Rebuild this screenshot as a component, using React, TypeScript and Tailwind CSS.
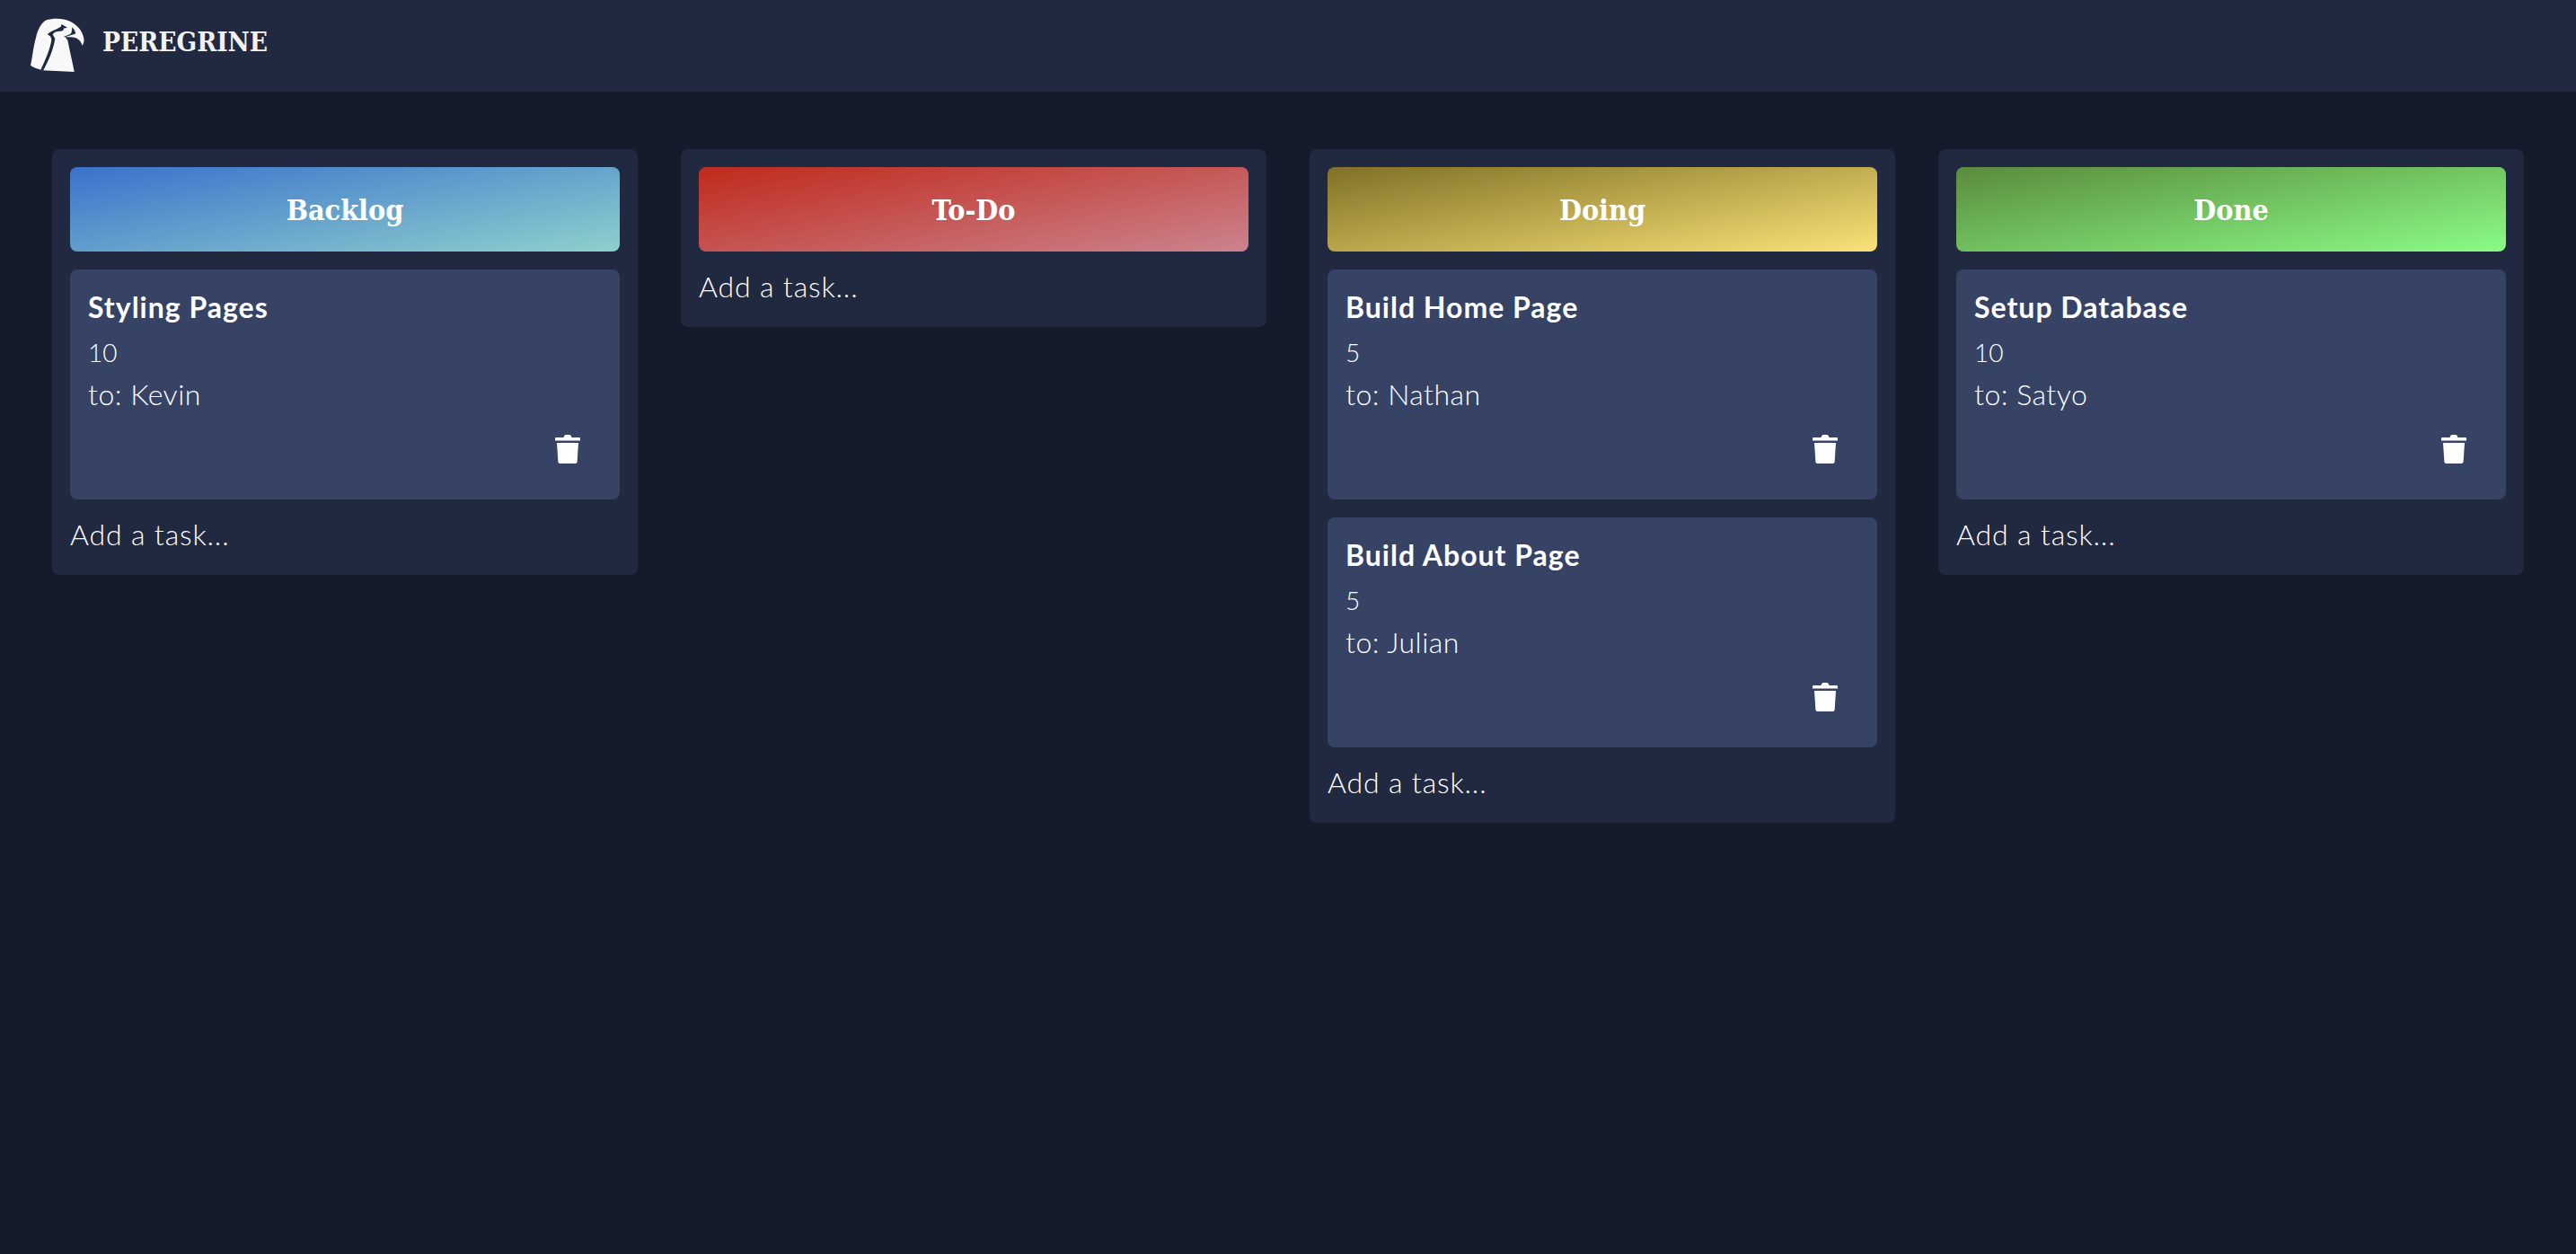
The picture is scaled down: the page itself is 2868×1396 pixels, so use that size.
const cols = [
  { name: "Backlog", grad: "bg-[linear-gradient(170deg,#3a72cc,#8fd0cc)]", tasks: [{ t: "Styling Pages", n: "10", to: "Kevin" }] },
  { name: "To-Do", grad: "bg-[linear-gradient(170deg,#c02a1c,#cb838e)]", tasks: [] },
  { name: "Doing", grad: "bg-[linear-gradient(170deg,#7f7126,#fbe277)]", tasks: [{ t: "Build Home Page", n: "5", to: "Nathan" }, { t: "Build About Page", n: "5", to: "Julian" }] },
  { name: "Done", grad: "bg-[linear-gradient(170deg,#5a8b3d,#8afc85)]", tasks: [{ t: "Setup Database", n: "10", to: "Satyo" }] },
];

function Trash() {
  return (
    <svg width="28" height="32" viewBox="0 0 28 32" fill="white">
      <path d="M0 4.5 C0 3.5 .5 3 1.5 3 H9.5 C10 1 11 0 12 0 H16 C17 0 18 1 18.5 3 H26.5 C27.5 3 28 3.5 28 4.5 V6.5 H0 Z" />
      <path d="M2 9 H26 L24.6 30 C24.5 31.3 23.6 32 22.5 32 H5.5 C4.4 32 3.5 31.3 3.4 30 Z" />
    </svg>
  );
}

function Logo() {
  return (
    <svg width="90" height="75" viewBox="0 0 270 225" className="-ml-[14px] -mr-[10px] mb-[4px] shrink-0">
      <path fill="#f8f8f8" d="M95 31 C118 24 150 24 175 36 C198 47 214 66 219 88 C222 100 220 110 215 116 C212 106 207 98 197 92 C187 88 172 87 158 88 L166 98 C172 130 182 170 188 204 L80 199 L73 196 C62 193 50 188 42 182 C48 160 50 125 60 90 C66 62 78 40 95 31 Z" />
      <path fill="#20293f" d="M98 79 C108 68 125 64 143 53 L146 45 L165 56 L152 59 C155 63 148 69 138 68 C128 68 120 72 116 79 L124 93 C118 130 102 168 84 200 L76 197 C94 160 108 125 112 97 C112 88 106 82 98 79 Z" />
      <path fill="#20293f" d="M181 55 C187 60 191 68 193 76 C185 80 172 83 158 88 L152 87 C162 82 174 80 178 74 C180 68 181 61 181 55 Z" />
    </svg>
  );
}

export default function App() {
  return (
    <div className="min-h-[1396px] bg-[#151b2b] font-['Lato',sans-serif] text-white">
      <header className="flex h-[102px] items-center bg-[#20293f] pl-[34px]">
        <Logo />
        <span className="mb-[8px] ml-[14px] font-['DejaVu_Serif',serif] text-[29.5px] font-bold text-[#f2f2f2] [font-stretch:condensed]">PEREGRINE</span>
      </header>
      <main className="grid grid-cols-4 items-start gap-[48px] px-[58px] pt-[64px]">
        {cols.map((c) => (
          <section key={c.name} className="flex flex-col gap-[20px] rounded-[8px] bg-[#20293f] px-[20px] pt-[20px] pb-[26px]">
            <h2 className={`flex h-[94px] items-center justify-center rounded-[8px] pt-[2px] font-['DejaVu_Serif',serif] text-[32px] font-bold [font-stretch:condensed] ${c.grad}`}>{c.name}</h2>
            {c.tasks.map((t) => (
              <article key={t.t} className="relative h-[256px] rounded-[8px] bg-[#364365] px-[20px] pt-[19px]">
                <h3 className="text-[32px] leading-[46px] font-bold tracking-[1px]">{t.t}</h3>
                <p className="mt-[4px] text-[28px] leading-[46px] font-light">{t.n}</p>
                <p className="text-[32px] leading-[48px] font-light tracking-[0.5px]">to: {t.to}</p>
                <div className="absolute right-[44px] bottom-[40px]"><Trash /></div>
              </article>
            ))}
            <p className="text-[32px] leading-[38px] font-light tracking-[0.85px]">Add a task...</p>
          </section>
        ))}
      </main>
    </div>
  );
}
